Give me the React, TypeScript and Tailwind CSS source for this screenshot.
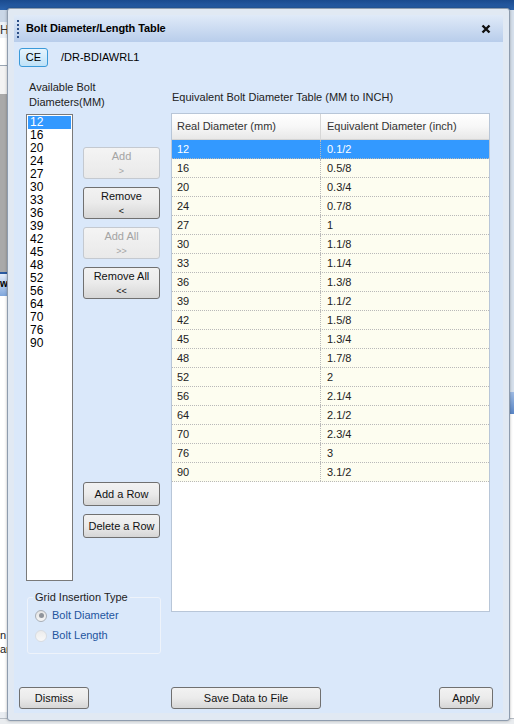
import React from 'react';

const diameters = ['12', '16', '20', '24', '27', '30', '33', '36', '39', '42', '45', '48', '52', '56', '64', '70', '76', '90'];
const inches = ['0.1/2', '0.5/8', '0.3/4', '0.7/8', '1', '1.1/8', '1.1/4', '1.3/8', '1.1/2', '1.5/8', '1.3/4', '1.7/8', '2', '2.1/4', '2.1/2', '2.3/4', '3', '3.1/2'];

const font = { fontFamily: '"Liberation Sans", Arial, sans-serif' };

function WinButton({ label, sub, disabled, className }: { label: string; sub?: string; disabled?: boolean; className?: string }) {
  return (
    <div
      className={
        'flex flex-col items-center justify-center rounded-[3px] border leading-[14px] text-[11px] ' +
        (disabled
          ? 'border-[#c4c9d0] bg-gradient-to-b from-[#f4f4f4] to-[#e9e9e9] text-[#a4a4a4]'
          : 'border-[#707070] bg-gradient-to-b from-[#f2f2f2] via-[#ebebeb] to-[#d6d6d6] text-[#111]') +
        ' ' +
        (className ?? '')
      }
    >
      <span>{label}</span>
      {sub && <span className="text-[9px] leading-[12px] mt-[2px]">{sub}</span>}
    </div>
  );
}

function Background() {
  return (
    <>
      <div className="absolute inset-x-0 top-0 h-[10px] bg-gradient-to-b from-[#1a4a8e] to-[#2b63ad]" />
      {/* left strip */}
      <div className="absolute left-0 top-[10px] w-[8px] h-[12px] bg-[#c9d6e6]" />
      <div className="absolute left-0 top-[22px] w-[8px] h-[16px] bg-[#eef2f7] text-[12px] leading-[16px] text-[#333]" style={font}>
        H
      </div>
      <div className="absolute left-0 top-[38px] w-[8px] h-[28px] bg-white border-b border-[#9aa6b4]" />
      <div className="absolute left-0 top-[66px] w-[8px] h-[28px] bg-[#f3f3f3]" />
      <div className="absolute left-0 top-[94px] w-[8px] h-[178px] bg-[#a9a9a9]" />
      <div className="absolute left-0 top-[272px] w-[8px] h-[24px] bg-gradient-to-b from-[#e6eefa] to-[#7fa6dc] border-t-2 border-[#2b5aa0] text-[10px] font-bold leading-[20px]" style={font}>
        w
      </div>
      <div className="absolute left-0 top-[296px] w-[8px] h-[416px] bg-white text-[11px] leading-[14px] text-[#222]" style={font}>
        <div className="mt-[332px]">n</div>
        <div>ar</div>
      </div>
      {/* right strip */}
      <div className="absolute right-0 top-[10px] w-[6px] h-[382px] bg-[#d6e0ec]" />
      <div className="absolute right-0 top-[392px] w-[6px] h-[22px] bg-gradient-to-b from-[#9fbce4] to-[#5a86c6]" />
      <div className="absolute right-0 top-[414px] w-[6px] h-[310px] bg-white border-l border-[#888]" />
      {/* bottom */}
      <div className="absolute inset-x-0 bottom-0 h-[6px] bg-[#e9ecef] border-t border-[#b6bcc4]" />
    </>
  );
}

export default function App() {
  return (
    <div className="relative w-[514px] h-[724px] overflow-hidden bg-[#e9edf2]" style={font}>
      <Background />

      {/* dialog window */}
      <div className="absolute left-[7px] top-[8px] w-[503px] h-[713px] rounded-[3px] border border-[#8e9cae] bg-[#e1e9f3] px-[6px] pt-[6px] pb-[7px] flex flex-col shadow-[0_0_3px_rgba(0,0,0,0.3)]">
        {/* title bar */}
        <div className="h-[27px] shrink-0 flex items-center bg-gradient-to-b from-[#e0eaf8] to-[#b8cdeb] pl-[3px] pr-[12px]">
          <div className="flex flex-col gap-[2px] mr-[7px]">
            <span className="w-[2px] h-[2px] bg-[#2c4f86]" />
            <span className="w-[2px] h-[2px] bg-[#2c4f86]" />
            <span className="w-[2px] h-[2px] bg-[#2c4f86]" />
            <span className="w-[2px] h-[2px] bg-[#2c4f86]" />
            <span className="w-[2px] h-[2px] bg-[#2c4f86]" />
          </div>
          <span className="text-[11px] font-bold tracking-[-0.1px] text-black">Bolt Diameter/Length Table</span>
          <svg className="ml-auto" width="10" height="10" viewBox="0 0 10 10">
            <path d="M1.5 1.5 L8.5 8.5 M8.5 1.5 L1.5 8.5" stroke="#111" strokeWidth="2.4" />
          </svg>
        </div>

        {/* content */}
        <div className="flex-1 flex flex-col bg-[#dae8fa] px-[5px] pt-[6px] pb-[4px]">
          <div className="flex items-center h-[19px] shrink-0">
            <div className="w-[29px] h-[19px] rounded-[3px] border border-[#3a9ad9] bg-gradient-to-b from-[#e6f4fd] to-[#bfe2f8] flex items-center justify-center text-[11px] text-black">
              CE
            </div>
            <span className="ml-[13px] text-[11px] text-black">/DR-BDIAWRL1</span>
          </div>

          <div className="flex items-start mt-[13px] shrink-0">
            {/* left part */}
            <div className="flex flex-col w-[135px] ml-[7px] shrink-0">
              <div className="flex h-[501px] shrink-0">
                <div className="flex flex-col w-[47px]">
                  <div className="text-[11px] leading-[15px] text-[#222] pl-[3px] w-[90px]">
                    Available Bolt
                    <br />
                    Diameters(MM)
                  </div>
                  <div className="mt-[4px] h-[468px] border border-[#7a7a7a] bg-white px-[1px] py-[1px]">
                    {diameters.map((d, i) => (
                      <div
                        key={d}
                        className={
                          'h-[13px] text-[12px] leading-[13px] pl-[2px] ' + (i === 0 ? 'bg-[#3399ff] text-white' : 'text-black')
                        }
                      >
                        {d}
                      </div>
                    ))}
                  </div>
                </div>
                <div className="flex flex-col ml-[10px] w-[77px] pt-[67px] pb-[43px]">
                  <WinButton label="Add" sub=">" disabled className="h-[32px]" />
                  <WinButton label="Remove" sub="<" className="h-[32px] mt-[8px]" />
                  <WinButton label="Add All" sub=">>" disabled className="h-[32px] mt-[8px]" />
                  <WinButton label="Remove All" sub="<<" className="h-[32px] mt-[8px]" />
                  <div className="flex-1" />
                  <WinButton label="Add a Row" className="h-[24px]" />
                  <WinButton label="Delete a Row" className="h-[24px] mt-[8px]" />
                </div>
              </div>

              {/* fieldset */}
              <div className="relative mt-[16px] ml-[1px] w-[134px] h-[57px] shrink-0 rounded-[3px] border border-[#eef3fa]">
                <span className="absolute -top-[8px] left-[5px] bg-[#dae8fa] px-[2px] text-[11px] leading-[14px] text-[#222]">
                  Grid Insertion Type
                </span>
                <div className="flex flex-col pt-[11px] pl-[7px] gap-[7px]">
                  <div className="flex items-center h-[13px]">
                    <span className="w-[12px] h-[12px] rounded-full border border-[#a8aeb6] bg-gradient-to-b from-[#e4e4e4] to-[#f6f6f6] flex items-center justify-center">
                      <span className="w-[5px] h-[5px] rounded-full bg-[#8f949b]" />
                    </span>
                    <span className="ml-[5px] text-[11px] text-[#23559e]">Bolt Diameter</span>
                  </div>
                  <div className="flex items-center h-[13px]">
                    <span className="w-[12px] h-[12px] rounded-full border border-[#d8dce2] bg-gradient-to-b from-[#ececec] to-[#f8f8f8]" />
                    <span className="ml-[5px] text-[11px] text-[#23559e]">Bolt Length</span>
                  </div>
                </div>
              </div>
            </div>

            {/* right part */}
            <div className="flex flex-col ml-[10px] w-[319px] shrink-0">
              <div className="h-[33px] pt-[10px] pl-[1px] text-[11px] leading-[14px] text-[#222]">
                Equivalent Bolt Diameter Table (MM to INCH)
              </div>
              <div className="h-[499px] border border-[#b8c6d8] bg-white">
                <div className="flex h-[26px] bg-gradient-to-b from-white via-[#f7f7f7] to-[#e8e8e8] border-b border-[#d4d4d4] text-[11px] text-[#333]">
                  <div className="w-[149px] flex items-center pl-[5px] border-r border-[#d7d7d7]">Real Diameter (mm)</div>
                  <div className="flex-1 flex items-center pl-[6px]">Equivalent Diameter (inch)</div>
                </div>
                {diameters.map((d, i) => (
                  <div
                    key={d}
                    className={
                      'flex h-[19px] border-b border-dotted border-[#b9b9b9] text-[11px] ' +
                      (i === 0 ? 'bg-[#3399ff] text-white' : 'bg-[#fdfdf0] text-[#222]')
                    }
                  >
                    <div className="w-[149px] flex items-center pl-[5px] border-r border-dotted border-[#b9b9b9]">{d}</div>
                    <div className="flex-1 flex items-center pl-[6px]">{inches[i]}</div>
                  </div>
                ))}
              </div>
            </div>
          </div>

          {/* bottom buttons */}
          <div className="flex items-center mt-auto h-[22px] shrink-0">
            <WinButton label="Dismiss" className="w-[70px] h-[22px]" />
            <WinButton label="Save Data to File" className="w-[150px] h-[22px] ml-[82px]" />
            <WinButton label="Apply" className="w-[54px] h-[22px] ml-auto mr-[5px]" />
          </div>
        </div>
      </div>
    </div>
  );
}
